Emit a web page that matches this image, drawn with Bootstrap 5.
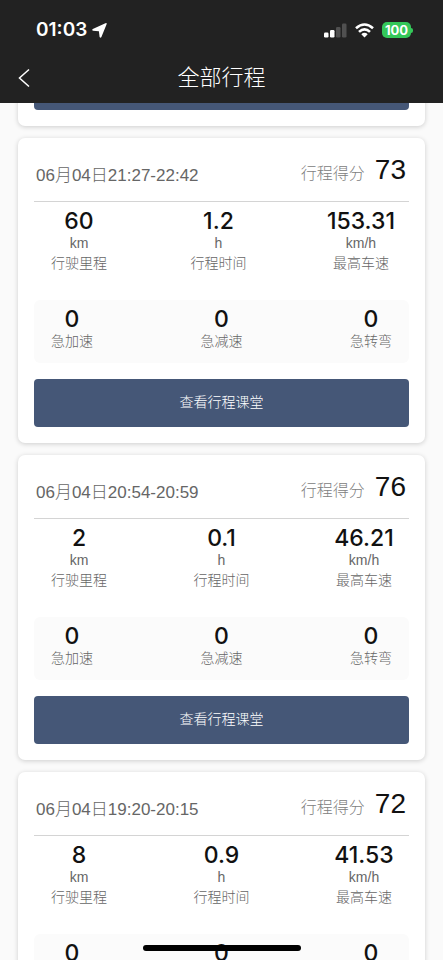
<!DOCTYPE html>
<html lang="zh-CN">
<head>
<meta charset="utf-8">
<meta name="viewport" content="width=device-width, initial-scale=1">
<title>全部行程</title>
<link href="https://cdn.jsdelivr.net/npm/bootstrap@5.3.0/dist/css/bootstrap.min.css" rel="stylesheet">
<style>
  body { font-family: "Liberation Sans", "Noto Sans CJK SC", sans-serif; background: #fafafa; color: #111; }
  .topbar { background: #222; }
  .status { height: 52px; padding: 8px 30px 0 36px; }
  .clock { font: 600 19px/24px Inter, sans-serif; }
  .battery-level { font: 700 13px/16px Inter, sans-serif; width: 29px; border-radius: 5px; background: #34c759; }
  .battery-tip { width: 2px; height: 5px; border-radius: 0 2px 2px 0; background: #34c759; }
  .titlebar { height: 51px; display: grid; grid-template-columns: 44px 1fr 44px; }
  .page-title { font-size: 22px; line-height: 32px; font-weight: 300; }
  .back { padding: 0 0 0 18px; }
  .trips { padding: 0 18px; gap: 12px; }
  .trip { border-radius: 7px; padding: 16px; background: #fff; box-shadow: 0 1px 5px rgba(0, 0, 0, .18); }
  .trip-partial { height: 23px; }
  .trip-head { height: 48px; padding: 0 3px 0 2px; border-bottom: 1px solid #d4d4d4; }
  .trip-time { font-size: 17px; line-height: 24px; color: #666; font-weight: 300; margin-top: 10px; }
  .score-group { gap: 10px; }
  .score-label { font-size: 16px; line-height: 24px; color: #808080; font-weight: 300; }
  .score { font-size: 28px; line-height: 32px; }
  .measures { padding: 7px 17px 0; height: 98px; }
  .events { padding: 7px 17px 0; height: 63px; border-radius: 6px; background: #fbfbfb; }
  .amount { font: 500 23px/24px Inter, sans-serif; margin: 0 -3px; }
  .legend-line { font-size: 14px; line-height: 20px; color: #666; font-weight: 300; }
  .lesson { height: 48px; margin-top: 16px; padding: 0 12px 3px; border: 0; border-radius: 4px; font-size: 14px; line-height: 20px; font-weight: 300; color: #fff; background: #455777; }
  .lesson:hover { color: #fff; background: #3c4d6b; }
  .home-bar { width: 158px; height: 6px; bottom: 9px; border-radius: 3px; background: #000; }
</style>
<script src="https://cdn.jsdelivr.net/npm/bootstrap@5.3.0/dist/js/bootstrap.bundle.min.js"></script>
</head>
<body class="vh-100 d-flex flex-column overflow-hidden position-relative">
<header class="topbar text-white flex-shrink-0">
  <div class="status d-flex align-items-center justify-content-between">
    <div class="d-flex align-items-center gap-1">
      <span class="clock">01:03</span>
      <svg width="17" height="17" viewBox="0 0 17 17" aria-hidden="true"><path d="M15.600 2.200 L10.400 15 Q9.600 16.600 8.600 15 L7.900 9.300 L2 8.800 Q.2 8.200 1.800 7.100 L14.400 1.200 Q16.200.7 15.600 2.200Z" fill="#fff"/></svg>
    </div>
    <div class="d-flex align-items-center gap-2">
      <svg width="23" height="15" viewBox="0 0 23 15" aria-hidden="true"><g fill="#fff"><rect x="0" y="9.500" width="4.500" height="5" rx="1.200"/><rect x="6" y="7" width="4.500" height="7.500" rx="1.200"/></g><g fill="#505050"><rect x="12" y="4" width="4.500" height="10.500" rx="1.200"/><rect x="18" y="0.500" width="4.500" height="14" rx="1.200"/></g></svg>
      <svg width="19" height="15" viewBox="0 0 19 15" aria-hidden="true"><g fill="none" stroke="#fff" stroke-width="2.600"><path d="M1 5.300 Q9.500-2.300 18 5.300"/><path d="M4 8.900 Q9.500 3.700 15 8.900"/></g><path d="M6.300 11.200 Q9.500 8.300 12.700 11.200 L9.500 14.500Z" fill="#fff"/></svg>
      <div class="d-flex align-items-center">
        <span class="battery-level text-center">100</span><span class="battery-tip"></span>
      </div>
    </div>
  </div>
  <div class="titlebar align-items-center">
    <button type="button" class="back btn text-start border-0" aria-label="返回"><svg class="d-block" width="13" height="20" viewBox="0 0 13 20" aria-hidden="true"><path d="M11 1.500 L1.500 10 L11 18.500" fill="none" stroke="#fff" stroke-width="1.500"/></svg></button>
    <h1 class="page-title text-center mb-0">全部行程</h1>
  </div>
</header>

<main class="trips d-flex flex-column flex-grow-1 overflow-hidden">
  <div class="trip-partial d-flex flex-column justify-content-end flex-shrink-0">
    <article class="trip"><button type="button" class="lesson btn d-block w-100" aria-label="查看行程课堂"></button></article>
  </div>

  <article class="trip flex-shrink-0">
    <div class="trip-head d-flex justify-content-between align-items-start">
      <time class="trip-time">06月04日21:27-22:42</time>
      <div class="score-group d-flex align-items-baseline"><span class="score-label">行程得分</span><span class="score">73</span></div>
    </div>
    <div class="measures d-flex justify-content-between text-center">
      <div><div class="amount">60</div><div class="legend-line">km</div><div class="legend-line">行驶里程</div></div>
      <div><div class="amount">1.2</div><div class="legend-line">h</div><div class="legend-line">行程时间</div></div>
      <div><div class="amount">153.31</div><div class="legend-line">km/h</div><div class="legend-line">最高车速</div></div>
    </div>
    <div class="events d-flex justify-content-between text-center">
      <div><div class="amount">0</div><div class="legend-line">急加速</div></div>
      <div><div class="amount">0</div><div class="legend-line">急减速</div></div>
      <div><div class="amount">0</div><div class="legend-line">急转弯</div></div>
    </div>
    <button type="button" class="lesson btn d-block w-100">查看行程课堂</button>
  </article>

  <article class="trip flex-shrink-0">
    <div class="trip-head d-flex justify-content-between align-items-start">
      <time class="trip-time">06月04日20:54-20:59</time>
      <div class="score-group d-flex align-items-baseline"><span class="score-label">行程得分</span><span class="score">76</span></div>
    </div>
    <div class="measures d-flex justify-content-between text-center">
      <div><div class="amount">2</div><div class="legend-line">km</div><div class="legend-line">行驶里程</div></div>
      <div><div class="amount">0.1</div><div class="legend-line">h</div><div class="legend-line">行程时间</div></div>
      <div><div class="amount">46.21</div><div class="legend-line">km/h</div><div class="legend-line">最高车速</div></div>
    </div>
    <div class="events d-flex justify-content-between text-center">
      <div><div class="amount">0</div><div class="legend-line">急加速</div></div>
      <div><div class="amount">0</div><div class="legend-line">急减速</div></div>
      <div><div class="amount">0</div><div class="legend-line">急转弯</div></div>
    </div>
    <button type="button" class="lesson btn d-block w-100">查看行程课堂</button>
  </article>

  <article class="trip flex-shrink-0">
    <div class="trip-head d-flex justify-content-between align-items-start">
      <time class="trip-time">06月04日19:20-20:15</time>
      <div class="score-group d-flex align-items-baseline"><span class="score-label">行程得分</span><span class="score">72</span></div>
    </div>
    <div class="measures d-flex justify-content-between text-center">
      <div><div class="amount">8</div><div class="legend-line">km</div><div class="legend-line">行驶里程</div></div>
      <div><div class="amount">0.9</div><div class="legend-line">h</div><div class="legend-line">行程时间</div></div>
      <div><div class="amount">41.53</div><div class="legend-line">km/h</div><div class="legend-line">最高车速</div></div>
    </div>
    <div class="events d-flex justify-content-between text-center">
      <div><div class="amount">0</div><div class="legend-line">急加速</div></div>
      <div><div class="amount">0</div><div class="legend-line">急减速</div></div>
      <div><div class="amount">0</div><div class="legend-line">急转弯</div></div>
    </div>
    <button type="button" class="lesson btn d-block w-100">查看行程课堂</button>
  </article>
</main>
<div class="home-bar position-absolute start-50 translate-middle-x"></div>
</body>
</html>
